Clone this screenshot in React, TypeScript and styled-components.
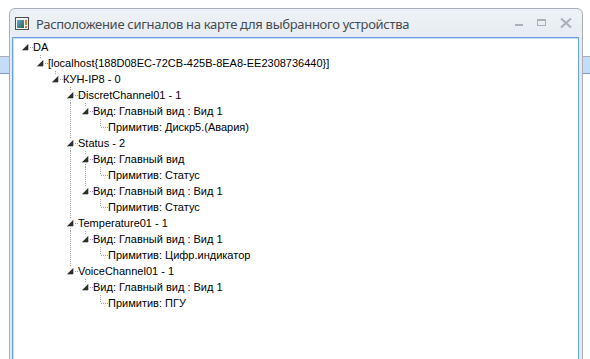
import React from 'react';
import styled, { createGlobalStyle } from 'styled-components';

const GlobalStyle = createGlobalStyle`
  html, body {
    margin: 0;
    padding: 0;
    background: #ffffff;
  }
`;

interface TreeNode {
  label: string;
  children?: TreeNode[];
}

interface FlatRow {
  label: string;
  level: number;
  guides: boolean[];
  hasChildren: boolean;
  hasNext: boolean;
  isRoot: boolean;
}

const view = (name: string, primitive: string): TreeNode => ({
  label: `Вид: ${name}`,
  children: [{ label: `Примитив: ${primitive}` }],
});

const tree: TreeNode[] = [
  {
    label: 'DA',
    children: [
      {
        label: '[localhost{188D08EC-72CB-425B-8EA8-EE2308736440}]',
        children: [
          {
            label: 'КУН-IP8 - 0',
            children: [
              { label: 'DiscretChannel01 - 1', children: [view('Главный вид : Вид 1', 'Дискр5.(Авария)')] },
              {
                label: 'Status - 2',
                children: [view('Главный вид', 'Статус'), view('Главный вид : Вид 1', 'Статус')],
              },
              { label: 'Temperature01 - 1', children: [view('Главный вид : Вид 1', 'Цифр.индикатор')] },
              { label: 'VoiceChannel01 - 1', children: [view('Главный вид : Вид 1', 'ПГУ')] },
            ],
          },
        ],
      },
    ],
  },
];

// flatten the tree, keeping track of which ancestor columns still need a line
const flatten = (nodes: TreeNode[], level = 0, guides: boolean[] = []): FlatRow[] =>
  nodes.flatMap((node, i) => {
    const hasNext = i < nodes.length - 1;
    const row: FlatRow = {
      label: node.label,
      level,
      guides,
      hasChildren: !!node.children?.length,
      hasNext,
      isRoot: level === 0 && i === 0,
    };
    return [row, ...(node.children ? flatten(node.children, level + 1, [...guides, hasNext]) : [])];
  });

const rows = flatten(tree);

const Desktop = styled.div`
  position: relative;
  width: 590px;
  height: 359px;
  overflow: hidden;
  background: #ffffff;
`;

const BackStrip = styled.div`
  margin-top: 56px;
  height: 16px;
  border-top: 1px solid #a9adb2;
  border-bottom: 1px solid #7f9ccb;
  background: #c5dcf9;
`;

const Window = styled.div`
  position: absolute;
  left: 9px;
  top: 8px;
  width: 572px;
  height: 360px;
  display: flex;
  flex-direction: column;
  border: 1px solid #a6afb9;
  border-radius: 6px 6px 0 0;
  background: linear-gradient(#eef2f6, #e4eaf1 40px);
`;

const TitleBar = styled.div`
  height: 28px;
  display: flex;
  align-items: center;
  padding-left: 5px;
  padding-right: 10px;
`;

const Title = styled.span`
  flex: 1;
  margin-left: 7px;
  margin-top: 1px;
  font-family: 'Noto Sans', 'Open Sans', sans-serif;
  font-size: 13px;
  letter-spacing: -0.3px;
  color: #454b52;
  white-space: nowrap;
`;

const Controls = styled.div`
  display: flex;
  align-items: center;
  gap: 13px;
`;

const ClientArea = styled.div`
  flex: 1;
  margin: 0 3px 0 2px;
  border: 1px solid #6f9ddf;
  box-shadow: inset 1px 1px 0 #cadcf5;
  background: #ffffff;
  padding: 1px 0 0 4px;
`;

const TreeList = styled.div`
  display: flex;
  flex-direction: column;
`;

const Row = styled.div`
  height: 16px;
  display: flex;
  align-items: center;
`;

const Guide = styled.svg`
  flex: none;
  width: 15px;
  height: 16px;
`;

const Expander = styled.svg`
  flex: none;
  width: 16px;
  height: 16px;
`;

const Label = styled.span`
  font-family: 'Liberation Sans', Arial, sans-serif;
  font-size: 11px;
  color: #000000;
  white-space: nowrap;
  line-height: 16px;
`;

const DOT = '#a0a0a0';

const AppIcon = () => (
  <svg width="14" height="13" viewBox="0 0 14 13">
    <defs>
      <linearGradient id="ic" x1="0" y1="0" x2="1" y2="1">
        <stop offset="0" stopColor="#6fa6c9" />
        <stop offset="1" stopColor="#1f6b57" />
      </linearGradient>
    </defs>
    <rect x="0.5" y="0.5" width="13" height="12" fill="#f4f4f4" stroke="#4a4f55" />
    <rect x="2" y="3" width="7" height="8" fill="url(#ic)" />
    <rect x="10" y="3" width="2" height="5" fill="#e07a1f" />
    <rect x="10" y="9" width="2" height="2" fill="#e07a1f" />
  </svg>
);

const WindowControls = () => (
  <Controls>
    <svg width="9" height="10" viewBox="0 0 9 10">
      <rect x="0" y="6" width="8" height="2" fill="#a9b0b8" />
    </svg>
    <svg width="10" height="10" viewBox="0 0 10 10">
      <rect x="0.5" y="1.5" width="8" height="6" fill="none" stroke="#a9b0b8" />
      <rect x="1" y="2" width="7" height="1" fill="#a9b0b8" />
    </svg>
    <svg width="12" height="10" viewBox="0 0 12 10">
      <path d="M1 0.5 L11 9.5 M11 0.5 L1 9.5" stroke="#a9b0b8" strokeWidth="2" />
    </svg>
  </Controls>
);

const TreeRow = ({ row }: { row: FlatRow }) => (
  <Row>
    {row.guides.map((on, k) => (
      <Guide key={k} viewBox="0 0 15 16" shapeRendering="crispEdges">
        {on && <line x1="8.5" y1="0" x2="8.5" y2="16" stroke={DOT} strokeDasharray="1 1" />}
      </Guide>
    ))}
    <Expander viewBox="0 0 16 16" shapeRendering="crispEdges">
      {!row.isRoot && <line x1="8.5" y1="0" x2="8.5" y2="8" stroke={DOT} strokeDasharray="1 1" />}
      {row.hasNext && <line x1="8.5" y1="9" x2="8.5" y2="16" stroke={DOT} strokeDasharray="1 1" />}
      <line x1="9" y1="8.5" x2="16" y2="8.5" stroke={DOT} strokeDasharray="1 1" />
      {row.hasChildren && (
        <>
          <rect x="4" y="4" width="8" height="8" fill="#ffffff" />
          <polygon points="11,5 11,11 5,11" fill="#2e2e2e" stroke="#7a7a7a" strokeWidth="0.5" />
        </>
      )}
    </Expander>
    <Label>{row.label}</Label>
  </Row>
);

export default function App() {
  return (
    <>
      <GlobalStyle />
      <Desktop>
        <BackStrip />
        <Window>
          <TitleBar>
            <AppIcon />
            <Title>Расположение сигналов на карте для выбранного устройства</Title>
            <WindowControls />
          </TitleBar>
          <ClientArea>
            <TreeList>
              {rows.map((row, i) => (
                <TreeRow key={i} row={row} />
              ))}
            </TreeList>
          </ClientArea>
        </Window>
      </Desktop>
    </>
  );
}
